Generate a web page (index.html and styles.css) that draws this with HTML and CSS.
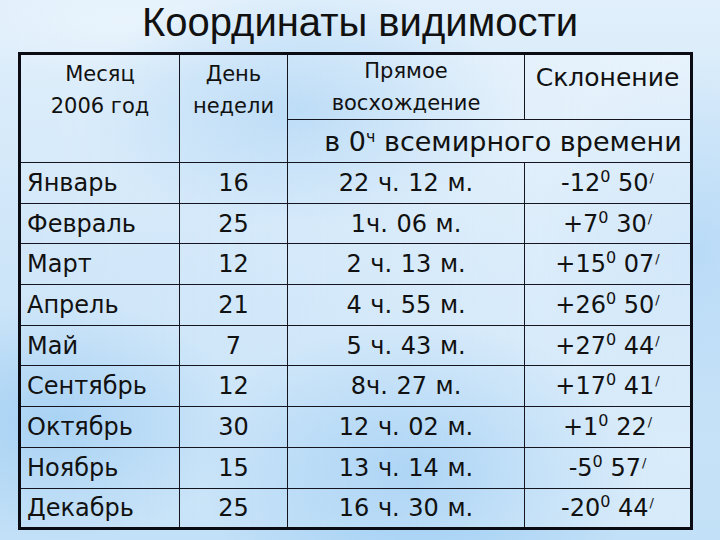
FILE: index.html
```html
<!DOCTYPE html>
<html lang="ru">
<head>
<meta charset="utf-8">
<title>Координаты видимости</title>
<link rel="stylesheet" href="styles.css">
</head>
<body>
<div class="slide">
  <h1 class="title">Координаты видимости</h1>
  <table class="coords">
    <colgroup>
      <col class="c1"><col class="c2"><col class="c3"><col class="c4">
    </colgroup>
    <thead>
      <tr class="h1">
        <th rowspan="2" class="hcell top">Месяц<br>2006 год</th>
        <th rowspan="2" class="hcell top">День<br>недели</th>
        <th class="hcell">Прямое<br>восхождение</th>
        <th class="hcell big top">Склонение</th>
      </tr>
      <tr class="h2">
        <th colspan="2" class="span">в 0<sup class="hs">ч</sup> всемирного времени</th>
      </tr>
    </thead>
    <tbody>
      <tr><td class="m">Январь</td><td>16</td><td class="ra">22 ч. 12 м.</td><td>-12<sup>0</sup> 50<sup class="mn">/</sup></td></tr>
      <tr><td class="m">Февраль</td><td>25</td><td class="ra">1ч. 06 м.</td><td>+7<sup>0</sup> 30<sup class="mn">/</sup></td></tr>
      <tr><td class="m">Март</td><td>12</td><td class="ra">2 ч. 13 м.</td><td>+15<sup>0</sup> 07<sup class="mn">/</sup></td></tr>
      <tr><td class="m">Апрель</td><td>21</td><td class="ra">4 ч. 55 м.</td><td>+26<sup>0</sup> 50<sup class="mn">/</sup></td></tr>
      <tr><td class="m">Май</td><td>7</td><td class="ra">5 ч. 43 м.</td><td>+27<sup>0</sup> 44<sup class="mn">/</sup></td></tr>
      <tr><td class="m">Сентябрь</td><td>12</td><td class="ra">8ч. 27 м.</td><td>+17<sup>0</sup> 41<sup class="mn">/</sup></td></tr>
      <tr><td class="m">Октябрь</td><td>30</td><td class="ra">12 ч. 02 м.</td><td>+1<sup>0</sup> 22<sup class="mn">/</sup></td></tr>
      <tr><td class="m">Ноябрь</td><td>15</td><td class="ra">13 ч. 14 м.</td><td>-5<sup>0</sup> 57<sup class="mn">/</sup></td></tr>
      <tr><td class="m">Декабрь</td><td>25</td><td class="ra">16 ч. 30 м.</td><td>-20<sup>0</sup> 44<sup class="mn">/</sup></td></tr>
    </tbody>
  </table>
</div>
</body>
</html>
```
FILE: styles.css
```css
html, body {
  margin: 0;
  padding: 0;
}
body {
  width: 720px;
  height: 540px;
  overflow: hidden;
  font-family: "DejaVu Sans", "Noto Sans", sans-serif;
  color: #111;
  background:
    radial-gradient(ellipse 180px 120px at 60px 420px, rgba(140,195,240,0.6), rgba(140,195,240,0) 100%),
    radial-gradient(ellipse 220px 150px at 420px 470px, rgba(120,185,240,0.55), rgba(120,185,240,0) 100%),
    radial-gradient(ellipse 220px 120px at 300px 110px, rgba(150,200,242,0.55), rgba(150,200,242,0) 100%),
    radial-gradient(ellipse 160px 200px at 700px 250px, rgba(165,208,245,0.5), rgba(165,208,245,0) 100%),
    radial-gradient(ellipse 200px 60px at 120px 20px, rgba(235,245,253,0.8), rgba(235,245,253,0) 100%),
    linear-gradient(180deg, #e0effb 0%, #cfe6f9 45%, #c2e0f7 100%);
}
.slide {
  display: flex;
  flex-direction: column;
  align-items: flex-start;
}
.title {
  align-self: center;
  margin: 0;
  height: 52px;
  font-family: "Liberation Sans", Arial, sans-serif;
  font-weight: normal;
  font-size: 40px;
  line-height: 44px;
  color: #111;
}
.coords {
  margin-left: 18px;
  width: 672px;
  border-collapse: collapse;
  border: 3px solid #0b0b14;
  table-layout: fixed;
  background:
    linear-gradient(90deg, rgba(255,255,255,0.05) 0%, rgba(255,255,255,0.12) 40%, rgba(255,255,255,0.35) 100%);
}
.c1 { width: 160px; }
.c2 { width: 108px; }
.c3 { width: 237px; }
.c4 { width: 167px; }
.coords th, .coords td {
  border: 1px solid #15151f;
  padding: 0;
  font-weight: normal;
  text-align: center;
  vertical-align: middle;
}
.h1 { height: 65px; }
.h2 { height: 43px; }
.coords th.hcell {
  font-size: 21px;
  line-height: 32px;
}
.coords th.top { vertical-align: top; padding-top: 3px; }
.coords th.big {
  font-size: 25px;
  line-height: 30px;
  padding-top: 8px;
}
.coords th.span {
  font-size: 27px;
  padding-left: 28px;
}
.hs {
  font-size: 16px;
  vertical-align: 9px;
  line-height: 0;
}
.coords tbody tr { height: 40.7px; }
.coords td {
  font-size: 24px;
  line-height: 30px;
}
.coords td.m {
  text-align: left;
  padding-left: 6px;
}
.coords td.ra {
  word-spacing: 1px;
}
sup {
  font-size: 16px;
  vertical-align: 9px;
  line-height: 0;
}
sup.mn {
  font-size: 13px;
  margin-left: 1px;
}
```
